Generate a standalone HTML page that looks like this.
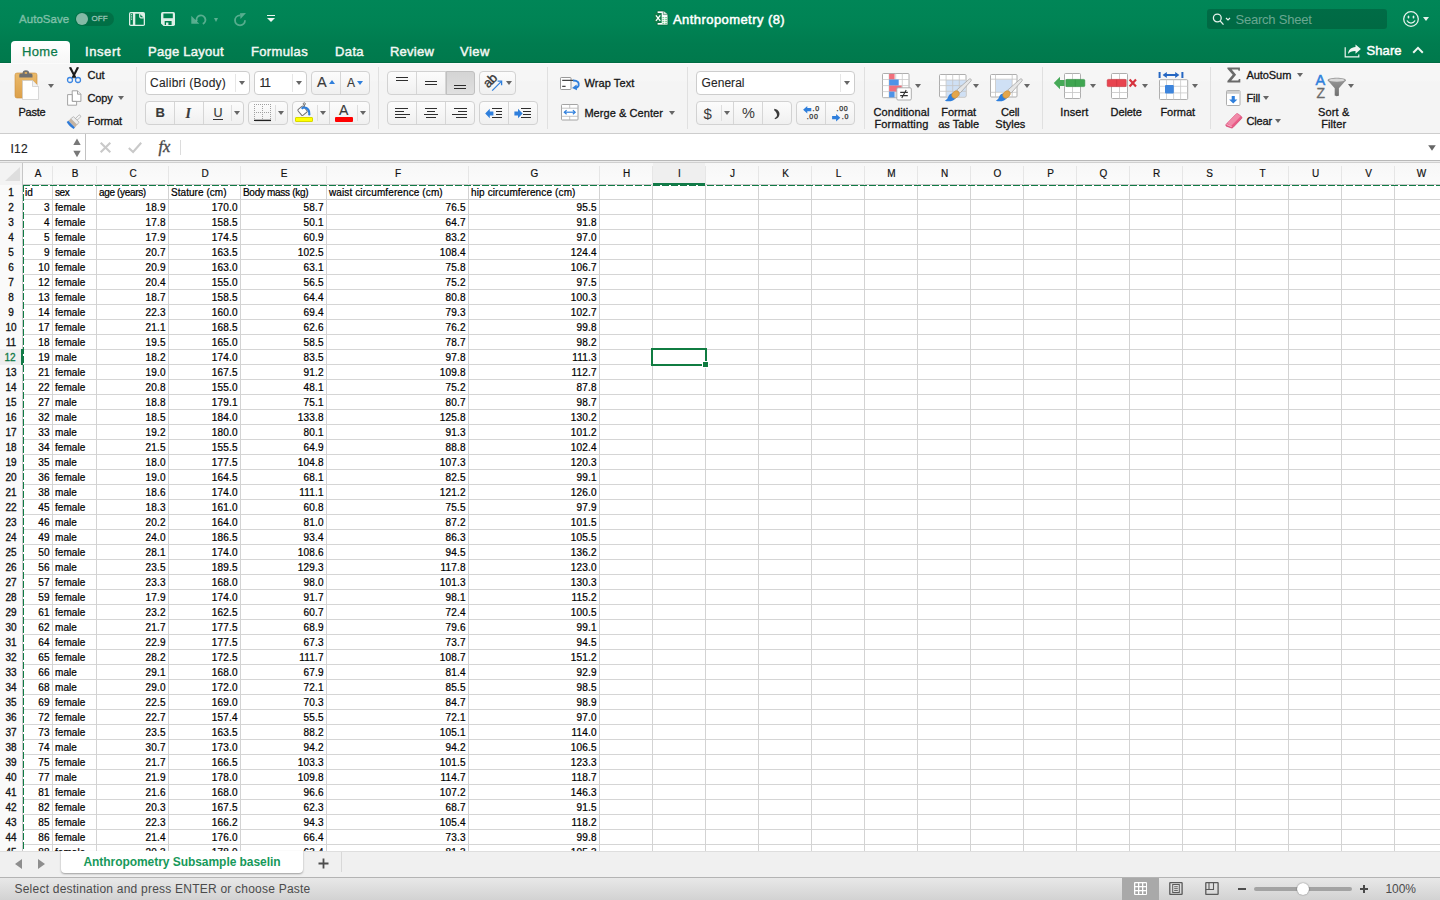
<!DOCTYPE html>
<html lang="en">
<head>
<meta charset="utf-8">
<title>Anthropometry (8)</title>
<style>
*{box-sizing:border-box;margin:0;padding:0}
html,body{width:1440px;height:900px;overflow:hidden;background:#fff}
body{font-family:"Liberation Sans",sans-serif;position:relative;color:#111}
.abs{position:absolute}
svg{position:absolute;overflow:visible}
/* ---------- title bar ---------- */
#top{position:absolute;left:0;top:0;width:1440px;height:63px;background:linear-gradient(#008657 0px,#008354 24px,#007c4f 44px,#00794c 62px,#006c43 62px,#006c43 63px)}
#top .t{position:absolute;color:#fff;white-space:nowrap}
.tab{position:absolute;top:44px;font-size:13px;line-height:15px;color:#f2f7f3;white-space:nowrap;-webkit-text-stroke:.45px #f2f7f3}
#hometab{position:absolute;left:11px;top:41px;width:59px;height:23px;border-radius:4px 4px 0 0;background:linear-gradient(#fff,#f6f6f6)}
/* ---------- ribbon ---------- */
#ribbon{position:absolute;left:0;top:63px;width:1440px;height:71px;background:linear-gradient(#fbfbfb 0,#fbfbfb 1px,#f6f6f6 1px,#f6f6f6 17px,#f4f4f4 19px,#f4f4f4 100%);border-bottom:1px solid #cdcdcd}
.rt{position:absolute;font-size:11px;color:#151515;white-space:nowrap;letter-spacing:.2px;-webkit-text-stroke:.3px #151515}
.rtc{text-align:center;line-height:12px}
.sep{position:absolute;top:67px;width:1px;height:62px;background:#e0e0e0}
.btn{position:absolute;border:1px solid #d2d2d2;border-radius:4px;background:linear-gradient(#fcfcfc,#f0f0f0)}
.btn i{position:absolute;top:0;bottom:0;width:1px;background:#d6d6d6}
.btn i.s{top:3px;bottom:3px;background:#dedede}
.btn b{position:absolute;top:-1px;bottom:-1px;background:linear-gradient(#d4d4d4,#e0e0e0);border:1px solid #c0c0c0}
.rt.ct{color:#262626;-webkit-text-stroke:.1px #262626}
.rt.gi{color:#3a3a3a;-webkit-text-stroke:.15px #3a3a3a}
.rt.sm{-webkit-text-stroke:.25px #2a2a2a;color:#2a2a2a}
.rt.th{-webkit-text-stroke:0}
.combo{position:absolute;border:1px solid #cdcdcd;border-radius:4px;background:#fff}
.combo i{position:absolute;top:2px;bottom:2px;width:1px;background:#e6e6e6}
.dd{position:absolute;width:0;height:0;border-left:3px solid transparent;border-right:3px solid transparent;border-top:4px solid #666}
/* ---------- formula bar ---------- */
#fbar{position:absolute;left:0;top:134px;width:1440px;height:26px;background:#fff}
#fline{position:absolute;left:0;top:160px;width:1440px;height:3px;background:linear-gradient(#b8b8b8 1px,#ececec 1px,#ececec 2px,#d0d0d0 2px)}
/* ---------- grid ---------- */
#colhdr{position:absolute;left:0;top:163px;width:1440px;height:22px;background:linear-gradient(#f7f7f7,#fbfbfb);border-bottom:1px solid #c9c9c9}
.ch{position:absolute;top:0;height:22px;line-height:21px;text-align:center;font-size:10px;color:#111;padding-left:1px;-webkit-text-stroke:.18px #111}
.ch.sel{background:#efefef;border-bottom:2px solid #127a48;height:22px}
.chl{position:absolute;top:3px;width:1px;height:19px;background:#e4e4e4}
#corner{position:absolute;left:0;top:163px;width:22px;height:22px;background:#f3f3f3}
#rowhdr{position:absolute;left:0;top:185px;width:22px;height:666px;background:#fafafa}
.rh{position:absolute;left:0;width:22px;height:15px;line-height:15px;text-align:center;font-size:10px;color:#111;-webkit-text-stroke:.3px #111}
.rh.sel{background:#efefef;color:#127a48;-webkit-text-stroke:.3px #127a48;border-right:2px solid #127a48;width:23px;padding-right:1px;margin-top:-1px;height:16px;padding-top:1px;z-index:2}
#grid{position:absolute;left:0;top:185px;width:1440px;height:666px;overflow:hidden;
 background-image:linear-gradient(to bottom,transparent 14px,#d5d5d5 14px);background-size:100% 15px;background-position:0 0}
.vl{position:absolute;top:185px;width:1px;height:666px;background:#d3d3d3}
.hl{position:absolute;top:166px;width:1px;height:19px;background:#e6e6e6}
.c{position:absolute;height:15px;line-height:15px;font-size:10px;white-space:nowrap;color:#000;-webkit-text-stroke:.22px #000;letter-spacing:.05px}
.c.r{letter-spacing:.2px}
.c.l{text-align:left;padding-left:2px}
.c.r{text-align:right;padding-right:2.300px}
/* ---------- bottom ---------- */
#tabbar{position:absolute;left:0;top:851px;width:1440px;height:26px;background:#f0f0f0;border-top:1px solid #dedede}
#tabline{position:absolute;left:0;top:877px;width:1440px;height:1px;background:#b4b4b4}
#status{position:absolute;left:0;top:878px;width:1440px;height:22px;background:linear-gradient(#e8e8e8,#d2d2d2)}
#sheettab{position:absolute;left:61px;top:851px;width:242px;height:22px;background:#fff;border-radius:0 0 4px 4px;box-shadow:0 1px 2px rgba(0,0,0,.35);text-align:center;font-size:12px;font-weight:bold;color:#17995a;line-height:23px;white-space:nowrap;letter-spacing:-.05px}
</style>
</head>
<body>
<!-- ================= TITLE BAR ================= -->
<div id="top">
<div class="t" style="left:19px;top:12px;font-size:11.5px;line-height:14px;color:rgba(255,255,255,.36);letter-spacing:.05px;-webkit-text-stroke:.5px rgba(255,255,255,.36)">AutoSave</div>
<div class="abs" style="left:75px;top:12px;width:39px;height:14px;border-radius:7px;background:rgba(0,40,20,.22)"></div>
<div class="abs" style="left:76px;top:13px;width:12px;height:12px;border-radius:6px;background:rgba(255,255,255,.52)"></div>
<div class="t" style="left:91.5px;top:14px;font-size:8px;line-height:10px;color:rgba(255,255,255,.5);letter-spacing:.1px;-webkit-text-stroke:.3px rgba(255,255,255,.5)">OFF</div>
<!-- sidebar/doc icon -->
<svg style="left:129px;top:12px" width="16" height="14" viewBox="0 0 16 14"><rect x="0" y="0" width="16" height="14" rx="1.800" fill="#dcefe6"/><rect x="1.300" y="1.300" width="2.600" height="11.400" fill="#00814f"/><path d="M6.300 1.700h4.300l4.100 4.100v6.900H6.300z" fill="#00814f"/><path d="M10.700 1.700v2.900a1.200 1.200 0 0 0 1.200 1.200h2.900" fill="none" stroke="#dcefe6" stroke-width="1.200"/><rect x="2" y="2.200" width="1.100" height="1.100" fill="#dcefe6"/><rect x="2" y="4.400" width="1.100" height="1.100" fill="#dcefe6"/><rect x="2" y="6.600" width="1.100" height="1.100" fill="#dcefe6"/></svg>
<!-- save icon -->
<svg style="left:161px;top:12px" width="14" height="14" viewBox="0 0 14 14"><path d="M1.700 0h10.600a1.700 1.700 0 0 1 1.700 1.700v10.600a1.700 1.700 0 0 1-1.700 1.700H2.600L0 11.400V1.700A1.700 1.700 0 0 1 1.700 0z" fill="#dcefe6"/><rect x="2.400" y="1.500" width="9.400" height="4.700" fill="#00814f"/><rect x="3.700" y="9" width="6.900" height="4" fill="#00804e"/><rect x="5" y="10.500" width="2.400" height="2.500" fill="#dcefe6"/></svg>
<!-- undo -->
<svg style="left:190px;top:12px" width="17" height="14" viewBox="0 0 17 14"><path d="M6.800 9.200A4.400 4.400 0 1 1 12.800 11.800" fill="none" stroke="rgba(255,255,255,.34)" stroke-width="1.900"/><path d="M1.300 3.800v8h8z" fill="rgba(255,255,255,.34)"/></svg>
<div class="abs" style="left:214px;top:18px;width:0;height:0;border-left:2.800px solid transparent;border-right:2.800px solid transparent;border-top:4px solid rgba(255,255,255,.36)"></div>
<!-- redo -->
<svg style="left:233px;top:12px" width="14" height="14" viewBox="0 0 14 14"><path d="M7 3.300A5 5 0 1 0 12 8.300" fill="none" stroke="rgba(255,255,255,.34)" stroke-width="1.800"/><path d="M7 1.200l6-.2-5.500 6z" fill="rgba(255,255,255,.34)"/></svg>
<!-- customize -->
<div class="abs" style="left:267px;top:15px;width:8px;height:1.400px;background:#eef6f1"></div>
<div class="abs" style="left:267px;top:17.800px;width:0;height:0;border-left:4px solid transparent;border-right:4px solid transparent;border-top:4.500px solid #eef6f1"></div>
<!-- title -->
<svg style="left:654px;top:10px" width="15" height="16" viewBox="0 0 15 16"><path d="M3.200 1h6.100l4.600 3.600v10.400H3.200z" fill="#fff" stroke="#0b5f38" stroke-width=".7"/><path d="M9.300 1v3.600h4.600" fill="#d3e6da" stroke="#0b5f38" stroke-width=".5"/><rect x="8.400" y="7.200" width="1.900" height="1" fill="#63c384"/><rect x="11.100" y="7.200" width="1.900" height="1" fill="#63c384"/><rect x="8.400" y="9.200" width="1.900" height="1" fill="#63c384"/><rect x="11.100" y="9.200" width="1.900" height="1" fill="#63c384"/><rect x="8.400" y="11.200" width="1.900" height="1" fill="#63c384"/><rect x="11.100" y="11.200" width="1.900" height="1" fill="#63c384"/><rect x="8.400" y="13.200" width="1.900" height="1" fill="#63c384"/><rect x="11.100" y="13.200" width="1.900" height="1" fill="#63c384"/><rect x=".2" y="3" width="7.500" height="10" fill="#107c4a"/><path d="M1.900 5.300l4.400 5.600M6.300 5.300l-4.400 5.600" stroke="#fff" stroke-width="1.300"/></svg>
<div class="t" style="left:673px;top:11.600px;font-size:13px;line-height:15px;color:#fff;-webkit-text-stroke:.5px #fff;letter-spacing:.43px">Anthropometry (8)</div>
<!-- search -->
<div class="abs" style="left:1207px;top:9px;width:180px;height:20px;border-radius:3px;background:rgba(0,0,0,.185)"></div>
<svg style="left:1212px;top:13px" width="20" height="13" viewBox="0 0 20 13"><circle cx="5.300" cy="5" r="3.900" fill="none" stroke="#e6f2ec" stroke-width="1.300"/><path d="M8.100 7.900l3.400 3.700" stroke="#e6f2ec" stroke-width="1.400"/><path d="M14 5l2 2 2-2" fill="none" stroke="#e6f2ec" stroke-width="1.200"/></svg>
<div class="t" style="left:1235.500px;top:12px;font-size:13px;line-height:15px;color:rgba(255,255,255,.42);letter-spacing:-.23px">Search Sheet</div>
<!-- smiley -->
<svg style="left:1402px;top:10px" width="18" height="18" viewBox="0 0 18 18"><circle cx="9" cy="9" r="7.300" fill="none" stroke="#e6f2ec" stroke-width="1.300"/><ellipse cx="6.500" cy="6.900" rx=".9" ry="1.500" fill="#e6f2ec"/><ellipse cx="11.500" cy="6.900" rx=".9" ry="1.500" fill="#e6f2ec"/><path d="M4.900 10.600c1.700 3.300 6.500 3.300 8.200 0" fill="none" stroke="#e6f2ec" stroke-width="1.200"/></svg>
<div class="abs" style="left:1422.600px;top:17.200px;width:0;height:0;border-left:3px solid transparent;border-right:3px solid transparent;border-top:4.400px solid #e6f2ec"></div>
<!-- tabs -->
<div id="hometab"></div>
<div class="tab" style="left:22px;color:#0b7a4b;-webkit-text-stroke:.25px #0b7a4b;letter-spacing:0.33px">Home</div>
<div class="tab" style="left:85px;letter-spacing:0.58px">Insert</div>
<div class="tab" style="left:148px;letter-spacing:0.27px">Page Layout</div>
<div class="tab" style="left:251px;letter-spacing:0.35px">Formulas</div>
<div class="tab" style="left:335px;letter-spacing:0.38px">Data</div>
<div class="tab" style="left:390px;letter-spacing:0.23px">Review</div>
<div class="tab" style="left:460px;letter-spacing:0.51px">View</div>
<!-- share -->
<svg style="left:1344px;top:44px" width="18" height="14" viewBox="0 0 18 14"><path d="M1.200 3.300v9.500h13.600v-2.400" fill="none" stroke="#eef6f1" stroke-width="1.200"/><path d="M11.500 .4l5.400 4.700-5.400 4.700V7C8 6.900 5.600 7.900 4 10c.4-4 3-6.600 7.500-6.900z" fill="#eef6f1"/></svg>
<div class="t" style="left:1366.500px;top:43px;font-size:13px;line-height:15px;color:#fff;-webkit-text-stroke:.45px #fff;letter-spacing:.1px">Share</div>
<svg style="left:1412px;top:46px" width="12" height="8" viewBox="0 0 12 8"><path d="M1.200 6.800l4.800-4.900 4.800 4.900" fill="none" stroke="#eef6f1" stroke-width="2"/></svg>

</div>
<!-- ================= RIBBON ================= -->
<div id="ribbon"></div>
<!-- clipboard -->
<svg style="left:14px;top:69px" width="26" height="32" viewBox="0 0 26 32"><defs><linearGradient id="gb" x1="0" x2="0" y1="0" y2="1"><stop offset="0" stop-color="#ebba6a"/><stop offset="1" stop-color="#dca04a"/></linearGradient></defs><rect x="1" y="4" width="22" height="25" rx="2" fill="url(#gb)" stroke="#c98f3c" stroke-width=".6"/><path d="M5.300 8.600V6.100a1.500 1.500 0 0 1 1.500-1.500h1.700a3.400 3.400 0 0 1 6.800 0h1.700a1.500 1.500 0 0 1 1.500 1.500v2.500z" fill="#707070"/><rect x="10.700" y="3.100" width="2.400" height="1.700" fill="#e9b25c"/><path d="M8.500 11.500h10l6 6v13h-16z" fill="#fff" stroke="#c9c9c9" stroke-width=".7"/><path d="M18.500 11.500v6h6" fill="#f2f2f2" stroke="#c9c9c9" stroke-width=".7"/></svg>
<div class="abs" style="left:47.5px;top:84px;width:0;height:0;border-left:3.3px solid transparent;border-right:3.3px solid transparent;border-top:4.6px solid #666"></div>
<div class="rt" style="left:18.5px;top:106px;font-size:11px;line-height:13px;letter-spacing:-0.23px">Paste</div>
<svg style="left:66px;top:66px" width="16" height="18" viewBox="0 0 16 18"><path d="M2.900 1.500L5.100 1.100 10.400 11.500 8.700 12.400z" fill="#1a1a1a"/><path d="M13.100 1.500L10.900 1.100 5.600 11.500 7.300 12.400z" fill="#1a1a1a"/><circle cx="4" cy="14" r="2.500" fill="none" stroke="#3b86e3" stroke-width="1.300"/><circle cx="12" cy="14" r="2.500" fill="none" stroke="#3b86e3" stroke-width="1.300"/></svg>
<div class="rt" style="left:87.5px;top:69px;font-size:11px;line-height:13px;letter-spacing:-0.04px">Cut</div>
<svg style="left:66px;top:90px" width="16" height="17" viewBox="0 0 16 17"><path d="M6.200 .8h5.300l3.400 3.400v7.200H6.200z" fill="#fff" stroke="#9a9a9a" stroke-width=".9"/><path d="M11.500 .8v3.400h3.400" fill="#f1f1f1" stroke="#9a9a9a" stroke-width=".9"/><path d="M1.600 4.600h4.600v6.800h4.400v3.800h-9z" fill="#fff" stroke="#9a9a9a" stroke-width=".9"/></svg>
<div class="rt" style="left:87.5px;top:92px;font-size:11px;line-height:13px;letter-spacing:-0.17px">Copy</div>
<div class="abs" style="left:118.2px;top:96.1px;width:0;height:0;border-left:3.3px solid transparent;border-right:3.3px solid transparent;border-top:4.6px solid #666"></div>
<svg style="left:65px;top:113px" width="18" height="16" viewBox="0 0 18 16"><g transform="translate(11.300 6.400) rotate(45)"><rect x="-1.250" y="-5.600" width="2.500" height="6.300" rx="1.200" fill="#f4f4f4" stroke="#9a9a9a" stroke-width=".6"/><path d="M-3.900 0h7.800l.5 3.400h-8.800z" fill="#ededed" stroke="#9d9d9d" stroke-width=".6"/><path d="M-4.400 3.400h8.800l.3 3.200h-9.400z" fill="#c4b3a1"/><path d="M-4.700 6.600h9.400l.2 2.100c-3 .9-6.800.9-9.800 0z" fill="#2f7ad6"/></g></svg>
<div class="rt" style="left:87.5px;top:115px;font-size:11px;line-height:13px;letter-spacing:-0.06px">Format</div>
<div class="sep" style="left:136px"></div>
<!-- font -->
<div class="combo" style="left:145px;top:71px;width:105px;height:24px"><i style="left:89px"></i></div>
<div class="rt ct" style="left:150px;top:76px;font-size:12px;line-height:14px;letter-spacing:0.24px">Calibri (Body)</div>
<div class="abs" style="left:239.2px;top:80.8px;width:0;height:0;border-left:3.3px solid transparent;border-right:3.3px solid transparent;border-top:4.6px solid #666"></div>
<div class="combo" style="left:254px;top:71px;width:52.5px;height:24px"><i style="left:36.8px"></i></div>
<div class="rt ct" style="left:259.5px;top:76px;font-size:12px;line-height:14px;letter-spacing:-0.98px">11</div>
<div class="abs" style="left:296.4px;top:80.8px;width:0;height:0;border-left:3.3px solid transparent;border-right:3.3px solid transparent;border-top:4.6px solid #666"></div>
<div class="btn" style="left:311px;top:71px;width:59px;height:24px"><i style="left:27.8px"></i></div>
<div class="rt gi" style="left:317px;top:74px;font-size:14.5px;line-height:17px;letter-spacing:0.33px">A</div>
<div class="abs" style="left:329px;top:80px;width:0;height:0;border-left:3.500px solid transparent;border-right:3.500px solid transparent;border-bottom:4.200px solid #2f7fdc"></div>
<div class="rt gi" style="left:347px;top:76px;font-size:12px;line-height:14px;letter-spacing:0.48px">A</div>
<div class="abs" style="left:357px;top:81px;width:0;height:0;border-left:3.500px solid transparent;border-right:3.500px solid transparent;border-top:4.200px solid #2f7fdc"></div>
<div class="btn" style="left:145px;top:101px;width:98.5px;height:24px"><i style="left:28px"></i><i style="left:57px"></i><i class="s" style="left:85px"></i></div>
<div class="rt gi" style="left:155.5px;top:105px;font-size:13px;line-height:16px;font-weight:bold">B</div>
<div class="rt gi" style="left:185.500px;top:105.500px;font-family:'Liberation Serif',serif;font-style:italic;font-weight:bold;font-size:14px;line-height:16px">I</div>
<div class="rt gi" style="left:213.5px;top:106px;font-size:12.5px;line-height:15px">U</div>
<div class="abs" style="left:213px;top:119px;width:10px;height:1.200px;background:#333"></div>
<div class="abs" style="left:234.2px;top:111px;width:0;height:0;border-left:3.3px solid transparent;border-right:3.3px solid transparent;border-top:4.6px solid #666"></div>
<div class="btn" style="left:248px;top:101px;width:39.5px;height:24px"><i class="s" style="left:25.8px"></i></div>
<svg style="left:254px;top:104px" width="17" height="18" viewBox="0 0 17 18"><path d="M0 .5h17M0 8.500h17M.5 0v15M8.500 0v15M16.500 0v15" stroke="#a0a0a0" stroke-width="1" stroke-dasharray="1 1" fill="none" shape-rendering="crispEdges"/><path d="M0 16.400h17" stroke="#222" stroke-width="1.400"/></svg>
<div class="abs" style="left:278.2px;top:111px;width:0;height:0;border-left:3.3px solid transparent;border-right:3.3px solid transparent;border-top:4.6px solid #666"></div>
<div class="btn" style="left:292.3px;top:101px;width:77.4px;height:24px"><i style="left:35.9px"></i><i class="s" style="left:23.5px"></i><i class="s" style="left:63.7px"></i></div>
<svg style="left:296px;top:102px" width="16" height="15" viewBox="0 0 16 15"><path d="M8.300 2.800v3.600" stroke="#666" stroke-width="1"/><circle cx="8.300" cy="1.900" r="1.100" fill="none" stroke="#666" stroke-width=".9"/><g transform="translate(6.500 8.700) rotate(-40)"><rect x="-3.500" y="-3.700" width="7" height="7.600" rx="1.100" fill="#fff" stroke="#707070" stroke-width="1"/></g><path d="M5.600 6.700C8.600 4.300 12.800 5.800 13.300 10.800" fill="none" stroke="#2f7fdc" stroke-width="2.100"/><path d="M13.300 9.600c.5 1.200 1.200 1.800 1.200 2.700a1.200 1.200 0 0 1-2.400 0c0-.9.700-1.500 1.200-2.700z" fill="#2f7fdc"/></svg>
<div class="abs" style="left:295px;top:117px;width:18px;height:4.800px;background:#ffff00;border:.5px solid #d8d800;border-radius:1px"></div>
<div class="abs" style="left:320.2px;top:111px;width:0;height:0;border-left:3.3px solid transparent;border-right:3.3px solid transparent;border-top:4.6px solid #666"></div>
<div class="rt gi" style="left:339px;top:102px;font-size:14px;line-height:17px;letter-spacing:0.66px">A</div>
<div class="abs" style="left:335px;top:117px;width:18px;height:4.800px;background:#f00;border-radius:1px"></div>
<div class="abs" style="left:360.2px;top:111px;width:0;height:0;border-left:3.3px solid transparent;border-right:3.3px solid transparent;border-top:4.6px solid #666"></div>
<div class="sep" style="left:378px"></div>
<!-- alignment -->
<div class="btn" style="left:387.2px;top:71px;width:87.6px;height:24px"><b style="left:57.4px;width:29.2px;border-radius:0 3px 3px 0"></b><i style="left:27.7px"></i><i style="left:56.9px"></i></div>
<div class="abs" style="left:396px;top:76.8px;width:12px;height:1.4px;background:#2e2e2e"></div>
<div class="abs" style="left:396px;top:79.9px;width:12px;height:1.4px;background:#2e2e2e"></div>
<div class="abs" style="left:425px;top:80.8px;width:12px;height:1.4px;background:#2e2e2e"></div>
<div class="abs" style="left:425px;top:83.9px;width:12px;height:1.4px;background:#2e2e2e"></div>
<div class="abs" style="left:454px;top:84.9px;width:12px;height:1.4px;background:#2e2e2e"></div>
<div class="abs" style="left:454px;top:88px;width:12px;height:1.4px;background:#2e2e2e"></div>
<div class="btn" style="left:479px;top:71px;width:36.6px;height:24px"></div>
<div class="rt gi" style="left:483px;top:72.500px;font-size:13px;line-height:15px;transform:rotate(-45deg);transform-origin:50% 50%;letter-spacing:-.3px;-webkit-text-stroke:.35px #3a3a3a">ab</div>
<svg style="left:490px;top:78px" width="14" height="14" viewBox="0 0 14 14"><path d="M2.200 12.600L11.200 3.600" stroke="#2f7fdc" stroke-width="1.200"/><path d="M7.600 3.200h4v4" fill="none" stroke="#2f7fdc" stroke-width="1.300"/></svg>
<div class="abs" style="left:506.2px;top:81px;width:0;height:0;border-left:3.3px solid transparent;border-right:3.3px solid transparent;border-top:4.6px solid #666"></div>
<div class="btn" style="left:387.2px;top:101px;width:87.6px;height:24px"><i style="left:27.7px"></i><i style="left:56.9px"></i></div>
<div class="abs" style="left:394.8px;top:107.6px;width:13px;height:1.4px;background:#2e2e2e"></div>
<div class="abs" style="left:394.8px;top:110.7px;width:9px;height:1.4px;background:#2e2e2e"></div>
<div class="abs" style="left:394.8px;top:113.8px;width:15px;height:1.4px;background:#2e2e2e"></div>
<div class="abs" style="left:394.8px;top:116.8px;width:11px;height:1.4px;background:#2e2e2e"></div>
<div class="abs" style="left:425px;top:107.6px;width:12px;height:1.4px;background:#2e2e2e"></div>
<div class="abs" style="left:427px;top:110.7px;width:8px;height:1.4px;background:#2e2e2e"></div>
<div class="abs" style="left:424px;top:113.8px;width:14px;height:1.4px;background:#2e2e2e"></div>
<div class="abs" style="left:426px;top:116.8px;width:10px;height:1.4px;background:#2e2e2e"></div>
<div class="abs" style="left:454.2px;top:107.6px;width:13px;height:1.4px;background:#2e2e2e"></div>
<div class="abs" style="left:458.2px;top:110.7px;width:9px;height:1.4px;background:#2e2e2e"></div>
<div class="abs" style="left:452.2px;top:113.8px;width:15px;height:1.4px;background:#2e2e2e"></div>
<div class="abs" style="left:456.2px;top:116.8px;width:11px;height:1.4px;background:#2e2e2e"></div>
<div class="btn" style="left:479px;top:101px;width:58.6px;height:24px"><i style="left:28px"></i></div>
<svg style="left:484.5px;top:107.5px" width="9" height="11" viewBox="0 0 9 11"><path d="M.2 5.500L4.800 .8v2.600h3.600v4.200H4.800v2.600z" fill="#2f7fdc"/></svg>
<div class="abs" style="left:492.3px;top:107.6px;width:9.7px;height:1.400px;background:#2e2e2e"></div>
<div class="abs" style="left:495.6px;top:110.7px;width:6.4px;height:1.400px;background:#2e2e2e"></div>
<div class="abs" style="left:495.6px;top:113.8px;width:6.4px;height:1.400px;background:#2e2e2e"></div>
<div class="abs" style="left:492.3px;top:116.8px;width:9.7px;height:1.400px;background:#2e2e2e"></div>
<svg style="left:513.6px;top:107.5px" width="9" height="11" viewBox="0 0 9 11"><path d="M8.600 5.500L4 .8v2.600H.4v4.200H4v2.600z" fill="#2f7fdc"/></svg>
<div class="abs" style="left:521px;top:107.6px;width:10px;height:1.400px;background:#2e2e2e"></div>
<div class="abs" style="left:522.5px;top:110.7px;width:8.5px;height:1.400px;background:#2e2e2e"></div>
<div class="abs" style="left:522.5px;top:113.8px;width:8.5px;height:1.400px;background:#2e2e2e"></div>
<div class="abs" style="left:521px;top:116.8px;width:10px;height:1.400px;background:#2e2e2e"></div>
<div class="sep" style="left:546.5px"></div>
<svg style="left:560px;top:77px" width="21" height="13" viewBox="0 0 21 13"><rect x=".5" y=".5" width="10.500" height="12" rx=".8" fill="#fff" stroke="#8d8d8d" stroke-width=".9"/><path d="M2.200 3.400h11.200M2.200 9.400h3.400" stroke="#444" stroke-width="1.100"/><path d="M13 3.400c4.400-.2 6.600 2.400 5.600 5.200-.5 1.300-1.800 2.200-3.400 2.400" fill="none" stroke="#2f7fdc" stroke-width="2"/><path d="M16.600 7.600l-4.600 3.400 5 2.200z" fill="#2f7fdc"/></svg>
<div class="rt" style="left:584.4px;top:77px;font-size:11px;line-height:13px;letter-spacing:0.1px">Wrap Text</div>
<svg style="left:561px;top:103.8px" width="17.5" height="16.5" viewBox="0 0 17.5 16.5"><rect x=".5" y=".5" width="16.500" height="15.500" rx=".8" fill="#fff" stroke="#9a9a9a" stroke-width=".9"/><path d="M.5 4.200h16.500M.5 12.300h16.500M8.700 .5v3.700M8.700 12.300v3.700" stroke="#b5b5b5" stroke-width=".8"/><path d="M3.600 8.200h10.300" stroke="#2f7fdc" stroke-width="1.200"/><path d="M5.600 6.200l-2.300 2 2.300 2M11.900 6.200l2.300 2-2.300 2" fill="none" stroke="#2f7fdc" stroke-width="1.200"/></svg>
<div class="rt" style="left:584.4px;top:107px;font-size:11px;line-height:13px;letter-spacing:0.07px">Merge &amp; Center</div>
<div class="abs" style="left:669.2px;top:111px;width:0;height:0;border-left:3.3px solid transparent;border-right:3.3px solid transparent;border-top:4.6px solid #666"></div>
<div class="sep" style="left:687px"></div>
<!-- number -->
<div class="combo" style="left:696.2px;top:71px;width:158.4px;height:24px"><i style="left:142.7px"></i></div>
<div class="rt ct" style="left:701.6px;top:76px;font-size:12px;line-height:14px;letter-spacing:0.04px">General</div>
<div class="abs" style="left:844.2px;top:80.8px;width:0;height:0;border-left:3.3px solid transparent;border-right:3.3px solid transparent;border-top:4.6px solid #666"></div>
<div class="btn" style="left:696.2px;top:101px;width:95.8px;height:24px"><i style="left:35.8px"></i><i style="left:64.5px"></i><i class="s" style="left:23.5px"></i></div>
<div class="rt gi th" style="left:703.6px;top:105px;font-size:15px;line-height:18px;letter-spacing:-0.34px">$</div>
<div class="abs" style="left:724.4px;top:111px;width:0;height:0;border-left:3.3px solid transparent;border-right:3.3px solid transparent;border-top:4.6px solid #666"></div>
<div class="rt gi th" style="left:742px;top:105px;font-size:14.5px;line-height:17px;letter-spacing:-0.91px">%</div>
<svg style="left:773px;top:107.5px" width="8" height="12" viewBox="0 0 8 12"><path d="M1.400 .8c4.400.6 6.200 4.600 4.400 7.800-.8 1.400-2.200 2.300-3.800 2.600l-.4-.9c1.700-.8 2.400-1.800 2.400-3.200 0-1.800-1.200-3.600-2.900-4.900z" fill="#3a3a3a"/></svg>
<div class="btn" style="left:796.2px;top:101px;width:58.4px;height:24px"><i style="left:27.7px"></i></div>
<svg style="left:802.8px;top:105.8px" width="8.4" height="7.4" viewBox="0 0 8.4 7.4"><path d="M.1 3.700L4.300 0v2.100h4v3.200h-4v2.100z" fill="#2f7fdc"/></svg>
<div class="rt sm" style="left:812.6px;top:105px;font-size:7px;line-height:8px;letter-spacing:.7px">.0</div>
<div class="rt sm" style="left:806.7px;top:113px;font-size:7px;line-height:8px;letter-spacing:.7px">.00</div>
<div class="rt sm" style="left:836.5px;top:105px;font-size:7px;line-height:8px;letter-spacing:.7px">.00</div>
<svg style="left:831.9px;top:114.1px" width="8.4" height="7.4" viewBox="0 0 8.4 7.4"><path d="M8.300 3.700L4.100 0v2.100h-4v3.200h4v2.100z" fill="#2f7fdc"/></svg>
<div class="rt sm" style="left:841.8px;top:113px;font-size:7px;line-height:8px;letter-spacing:.7px">.0</div>
<div class="sep" style="left:863.5px"></div>
<!-- styles -->
<svg style="left:882px;top:73px" width="30" height="28" viewBox="0 0 30 28"><rect x=".5" y=".5" width="26.500" height="24.200" rx="1" fill="#fff" stroke="#a5a5a5" stroke-width=".9"/><path d="M7.100 .5v24.200M13.700 .5v24.200M20.300 .5v24.200M.5 6.500h26.500M.5 12.600h26.500M.5 18.600h26.500" stroke="#c9c9c9" stroke-width=".8"/><rect x="7.100" y=".9" width="5.500" height="5.600" fill="#f0707c"/><rect x="7.100" y="6.500" width="9.600" height="6.100" fill="#4e93e6"/><rect x="7.100" y="12.600" width="12.600" height="6" fill="#f0707c"/><rect x="7.100" y="18.600" width="5.500" height="5.800" fill="#4e93e6"/><rect x="14.800" y="14.800" width="14.500" height="12.200" rx="1.200" fill="#fff" stroke="#a5a5a5" stroke-width=".9"/><path d="M18.200 19.400h7.600M18.200 22.600h7.600M24.200 17l-4.400 8" stroke="#333" stroke-width="1.100"/></svg>
<div class="abs" style="left:915.2px;top:84px;width:0;height:0;border-left:3.3px solid transparent;border-right:3.3px solid transparent;border-top:4.6px solid #666"></div>
<div class="rt" style="left:873.5px;top:106px;font-size:11px;line-height:13px;letter-spacing:0.09px">Conditional</div>
<div class="rt" style="left:874.5px;top:118px;font-size:11px;line-height:13px;letter-spacing:0.14px">Formatting</div>
<svg style="left:939px;top:74px" width="36" height="29" viewBox="0 0 36 29"><rect x=".5" y=".5" width="26.500" height="22.500" rx="1" fill="#fff" stroke="#a5a5a5" stroke-width=".9"/><rect x="7.200" y="6" width="19.400" height="16.600" fill="#cfe0f5"/><path d="M7.100 .5v22.500M13.700 .5v22.500M20.300 .5v22.500M.5 6h26.500M.5 11.600h26.500M.5 17.300h26.500" stroke="#c4c4c4" stroke-width=".8"/><path d="M30.300 5a1.300 1.300 0 0 1 1.800 1.800L21 19.200 17.800 16z" fill="#e6e6e6" stroke="#9e9e9e" stroke-width=".7"/><path d="M13.600 19.200c-2.600.2-3.900 1.900-4.500 3.800-.5 1.600-1.500 2.800-3.300 3.700 4.300 1.300 9.100.4 11.500-3.300.6-1 .5-1.800-.2-2.500z" fill="#2f7fdc"/><ellipse cx="16.500" cy="20.500" rx="4.100" ry="3.200" transform="rotate(-45 16.500 20.500)" fill="#e3a64c" stroke="#c78a35" stroke-width=".5"/></svg>
<div class="abs" style="left:973px;top:84px;width:0;height:0;border-left:3.3px solid transparent;border-right:3.3px solid transparent;border-top:4.6px solid #666"></div>
<div class="rt" style="left:941.2px;top:106px;font-size:11px;line-height:13px;letter-spacing:0.03px">Format</div>
<div class="rt" style="left:938.2px;top:118px;font-size:11px;line-height:13px;letter-spacing:0.03px">as Table</div>
<svg style="left:990px;top:74px" width="36" height="29" viewBox="0 0 36 29"><rect x=".5" y=".5" width="26.500" height="22.500" rx="1" fill="#fff" stroke="#a5a5a5" stroke-width=".9"/><rect x="6" y="5.500" width="16" height="12.500" fill="#cfe0f5"/><path d="M5.500 .5v22.500M22.200 .5v22.500M.5 5.200h26.500M.5 18.300h26.500" stroke="#c4c4c4" stroke-width=".8"/><path d="M30.300 5a1.300 1.300 0 0 1 1.800 1.800L21 19.200 17.800 16z" fill="#e6e6e6" stroke="#9e9e9e" stroke-width=".7"/><path d="M13.600 19.200c-2.600.2-3.900 1.900-4.500 3.800-.5 1.600-1.500 2.800-3.300 3.700 4.300 1.300 9.100.4 11.500-3.300.6-1 .5-1.800-.2-2.500z" fill="#2f7fdc"/><ellipse cx="16.500" cy="20.500" rx="4.100" ry="3.200" transform="rotate(-45 16.500 20.500)" fill="#e3a64c" stroke="#c78a35" stroke-width=".5"/></svg>
<div class="abs" style="left:1024.2px;top:84px;width:0;height:0;border-left:3.3px solid transparent;border-right:3.3px solid transparent;border-top:4.6px solid #666"></div>
<div class="rt" style="left:1001px;top:106px;font-size:11px;line-height:13px;letter-spacing:-0.14px">Cell</div>
<div class="rt" style="left:995.35px;top:118px;font-size:11px;line-height:13px;letter-spacing:-0.01px">Styles</div>
<div class="sep" style="left:1042.3px"></div>
<!-- cells -->
<svg style="left:1053px;top:73px" width="33" height="27" viewBox="0 0 33 27"><rect x="11.500" y=".5" width="16" height="25" rx="1" fill="#fff" stroke="#a5a5a5" stroke-width=".9"/><path d="M19.500 .5v25M11.500 6.700h16M11.500 13.400h16M11.500 19.500h16" stroke="#c4c4c4" stroke-width=".8"/><path d="M.8 10l6.200-6.200v3.100h4.500v6.200H7v3.100z" fill="#46a957"/><rect x="12.800" y="6.400" width="19" height="7.200" rx="1.200" fill="#3fa651" stroke="#2f8f41" stroke-width=".6"/><path d="M22.300 6.600v6.800" stroke="#2f8f41" stroke-width=".6"/></svg>
<div class="abs" style="left:1090.2px;top:84px;width:0;height:0;border-left:3.3px solid transparent;border-right:3.3px solid transparent;border-top:4.6px solid #666"></div>
<div class="rt" style="left:1060.35px;top:106px;font-size:11px;line-height:13px;letter-spacing:0.1px">Insert</div>
<svg style="left:1106px;top:73px" width="33" height="27" viewBox="0 0 33 27"><rect x="5.500" y=".5" width="16" height="25" rx="1" fill="#fff" stroke="#a5a5a5" stroke-width=".9"/><path d="M13.500 .5v25M5.500 6.700h16M5.500 13.400h16M5.500 19.500h16" stroke="#c4c4c4" stroke-width=".8"/><rect x="1.200" y="6.400" width="19" height="7.200" rx="1.200" fill="#e8444f" stroke="#c8303b" stroke-width=".6"/><path d="M10.700 6.600v6.800" stroke="#c8303b" stroke-width=".6"/><path d="M23.600 6.600l6.400 6.800M30 6.600l-6.400 6.800" stroke="#d6323d" stroke-width="2.200"/></svg>
<div class="abs" style="left:1142px;top:84px;width:0;height:0;border-left:3.3px solid transparent;border-right:3.3px solid transparent;border-top:4.6px solid #666"></div>
<div class="rt" style="left:1110.55px;top:106px;font-size:11px;line-height:13px;letter-spacing:-0.08px">Delete</div>
<svg style="left:1158px;top:71px" width="31" height="30" viewBox="0 0 31 30"><rect x="1.500" y="8.700" width="28.200" height="19.800" rx="1" fill="#fff" stroke="#a5a5a5" stroke-width=".9"/><path d="M8.500 8.700v19.800M15.600 8.700v19.800M22.600 8.700v19.800M1.500 15.300h28.200M1.500 21.900h28.200" stroke="#c9c9c9" stroke-width=".8"/><rect x="7" y="14" width="8.800" height="8.600" rx="1" fill="#3d85dd"/><path d="M1.600 1v6M24.400 1v6" stroke="#2566c2" stroke-width="2"/><path d="M7.500 4h11" stroke="#2566c2" stroke-width="2"/><path d="M8.800 .9L4.600 4l4.200 3.100zM17.200 .9L21.400 4l-4.200 3.100z" fill="#2566c2"/></svg>
<div class="abs" style="left:1192.2px;top:84px;width:0;height:0;border-left:3.3px solid transparent;border-right:3.3px solid transparent;border-top:4.6px solid #666"></div>
<div class="rt" style="left:1160.4px;top:106px;font-size:11px;line-height:13px;letter-spacing:-0.04px">Format</div>
<div class="sep" style="left:1210px"></div>
<!-- editing -->
<svg style="left:1226.5px;top:67px" width="14" height="16" viewBox="0 0 14 16"><path d="M.4 .4h12.500v3.300h-1.400l-.4-1.300H4.700l4.400 5.400-4.800 5.800h7l.6-1.600h1.400v3.600H.4v-1.500l5.300-6.300L.4 1.700z" fill="#6a6a6a"/></svg>
<div class="rt" style="left:1246.5px;top:69px;font-size:11px;line-height:13px;letter-spacing:-0.07px">AutoSum</div>
<div class="abs" style="left:1297.2px;top:73.2px;width:0;height:0;border-left:3.3px solid transparent;border-right:3.3px solid transparent;border-top:4.6px solid #666"></div>
<svg style="left:1226px;top:90px" width="14.5" height="16" viewBox="0 0 14.5 16"><rect x=".5" y=".5" width="13.500" height="15" rx="1" fill="#fff" stroke="#a5a5a5" stroke-width=".9"/><rect x=".9" y=".9" width="12.700" height="2.900" fill="#cfcfcf"/><path d="M5.700 6h3.100v3.600h2.600L7.250 13.600 3.100 9.600h2.600z" fill="#2f7fdc"/></svg>
<div class="rt" style="left:1246.5px;top:92px;font-size:11px;line-height:13px;letter-spacing:-0.14px">Fill</div>
<div class="abs" style="left:1263.4px;top:96px;width:0;height:0;border-left:3.3px solid transparent;border-right:3.3px solid transparent;border-top:4.6px solid #666"></div>
<svg style="left:1224.5px;top:112px" width="18" height="17" viewBox="0 0 18 17"><path d="M1.200 12.300l9.800-10.100c.6-.6 1.500-.7 2.100-.2l3.300 2.600c.6.500.7 1.300.2 1.900L7.900 15.600c-.5.500-1.300.6-1.900.2l-4.600-1.600c-.7-.4-.8-1.300-.2-1.900z" fill="#ea5b86" stroke="#cf3e6b" stroke-width=".7"/><path d="M2.200 11.300l9-9.300c.5-.5 1.100-.5 1.600-.1l2.900 2.300-9.600 9.900z" fill="#f18aa9"/><path d="M1.500 12.400l5.200 2.300" stroke="#f7b8cb" stroke-width="1"/></svg>
<div class="rt" style="left:1246.5px;top:115px;font-size:11px;line-height:13px;letter-spacing:-0.18px">Clear</div>
<div class="abs" style="left:1275.2px;top:119px;width:0;height:0;border-left:3.3px solid transparent;border-right:3.3px solid transparent;border-top:4.6px solid #666"></div>
<div class="rt" style="left:1315.4px;top:72px;font-size:14.5px;line-height:17px;letter-spacing:1.33px;color:#2f7fdc;-webkit-text-stroke:.5px #2f7fdc">A</div>
<div class="rt" style="left:1316.6px;top:85px;font-size:14px;line-height:17px;letter-spacing:0.64px;color:#6a6a6a;-webkit-text-stroke:.3px #6a6a6a">Z</div>
<svg style="left:1326.6px;top:76.8px" width="20" height="21" viewBox="0 0 20 21"><defs><linearGradient id="gf" x1="0" x2="0" y1="0" y2="1"><stop offset="0" stop-color="#9a9a9a"/><stop offset="1" stop-color="#707070"/></linearGradient></defs><path d="M.6 3.200c0-1.400 4-2.400 9.200-2.400s9.200 1 9.200 2.400c0 .5-.4.900-1.100 1.300l-6 6.800v7c0 1.200-4.200 1.200-4.200 0v-7l-6-6.800C1 4.100.6 3.700.6 3.200z" fill="url(#gf)"/><ellipse cx="9.800" cy="3.200" rx="7.800" ry="1.600" fill="#d9d9d9"/></svg>
<div class="abs" style="left:1348.2px;top:84px;width:0;height:0;border-left:3.3px solid transparent;border-right:3.3px solid transparent;border-top:4.6px solid #666"></div>
<div class="rt" style="left:1318px;top:106px;font-size:11px;line-height:13px;letter-spacing:0.14px">Sort &amp;</div>
<div class="rt" style="left:1321.2px;top:118px;font-size:11px;line-height:13px;letter-spacing:0.09px">Filter</div>

<!-- ================= FORMULA BAR ================= -->
<div id="fbar"></div>
<div id="fline"></div>
<div class="abs" style="left:10.500px;top:142px;font-size:12px;line-height:14px;color:#222;letter-spacing:.2px;-webkit-text-stroke:.15px #222">I12</div>
<svg style="left:72.500px;top:137.500px" width="8" height="20" viewBox="0 0 8 20"><path d="M4 .4L7.700 6.900H.3zM4 19.200L7.700 12.700H.3z" fill="#787878"/></svg>
<div class="abs" style="left:85px;top:134px;width:1px;height:26px;background:#c2c2c2"></div>
<svg style="left:100px;top:142px" width="11" height="11" viewBox="0 0 11 11"><path d="M.7 .7l9.600 9.600M10.300 .7L.7 10.300" stroke="#c9c9c9" stroke-width="2.100"/></svg>
<svg style="left:128px;top:142px" width="14" height="11" viewBox="0 0 14 11"><path d="M.8 6l4.300 4L13.200 .8" fill="none" stroke="#c9c9c9" stroke-width="2.100"/></svg>
<div class="abs" style="left:158.500px;top:138px;font-family:'Liberation Serif',serif;font-style:italic;font-size:16.500px;line-height:18px;color:#484848;letter-spacing:0;-webkit-text-stroke:.35px #484848">fx</div>
<div class="abs" style="left:180px;top:140px;width:1px;height:15px;background:#dcdcdc"></div>
<svg style="left:1428px;top:145px" width="8" height="6" viewBox="0 0 8 6"><path d="M.2 .3h7.600L4 5.800z" fill="#666"/></svg>

<!-- ================= GRID ================= -->
<div id="colhdr">
<div class="ch" style="left:23px;width:29px">A</div>
<div class="ch" style="left:53px;width:43px">B</div>
<div class="ch" style="left:97px;width:71px">C</div>
<div class="ch" style="left:169px;width:71px">D</div>
<div class="ch" style="left:241px;width:85px">E</div>
<div class="ch" style="left:327px;width:141px">F</div>
<div class="ch" style="left:469px;width:130px">G</div>
<div class="ch" style="left:600px;width:52px">H</div>
<div class="ch sel" style="left:653px;width:52px">I</div>
<div class="ch" style="left:706px;width:52px">J</div>
<div class="ch" style="left:759px;width:52px">K</div>
<div class="ch" style="left:812px;width:52px">L</div>
<div class="ch" style="left:865px;width:52px">M</div>
<div class="ch" style="left:918px;width:52px">N</div>
<div class="ch" style="left:971px;width:52px">O</div>
<div class="ch" style="left:1024px;width:52px">P</div>
<div class="ch" style="left:1077px;width:52px">Q</div>
<div class="ch" style="left:1130px;width:52px">R</div>
<div class="ch" style="left:1183px;width:52px">S</div>
<div class="ch" style="left:1236px;width:52px">T</div>
<div class="ch" style="left:1289px;width:52px">U</div>
<div class="ch" style="left:1342px;width:52px">V</div>
<div class="ch" style="left:1395px;width:52px">W</div>
</div>
<div id="corner"></div>
<svg style="left:5px;top:167px" width="15" height="14" viewBox="0 0 15 14"><path d="M15 0v14H0z" fill="#dedede"/></svg>
<i class="vl" style="left:22px;top:163px;height:688px;background:#c6c6c6"></i>
<div id="grid"></div>
<div id="rowhdr"></div>
<i class="vl" style="left:52px"></i><i class="hl" style="left:52px"></i>
<i class="vl" style="left:96px"></i><i class="hl" style="left:96px"></i>
<i class="vl" style="left:168px"></i><i class="hl" style="left:168px"></i>
<i class="vl" style="left:240px"></i><i class="hl" style="left:240px"></i>
<i class="vl" style="left:326px"></i><i class="hl" style="left:326px"></i>
<i class="vl" style="left:468px"></i><i class="hl" style="left:468px"></i>
<i class="vl" style="left:599px"></i><i class="hl" style="left:599px"></i>
<i class="vl" style="left:652px"></i><i class="hl" style="left:652px"></i>
<i class="vl" style="left:705px"></i><i class="hl" style="left:705px"></i>
<i class="vl" style="left:758px"></i><i class="hl" style="left:758px"></i>
<i class="vl" style="left:811px"></i><i class="hl" style="left:811px"></i>
<i class="vl" style="left:864px"></i><i class="hl" style="left:864px"></i>
<i class="vl" style="left:917px"></i><i class="hl" style="left:917px"></i>
<i class="vl" style="left:970px"></i><i class="hl" style="left:970px"></i>
<i class="vl" style="left:1023px"></i><i class="hl" style="left:1023px"></i>
<i class="vl" style="left:1076px"></i><i class="hl" style="left:1076px"></i>
<i class="vl" style="left:1129px"></i><i class="hl" style="left:1129px"></i>
<i class="vl" style="left:1182px"></i><i class="hl" style="left:1182px"></i>
<i class="vl" style="left:1235px"></i><i class="hl" style="left:1235px"></i>
<i class="vl" style="left:1288px"></i><i class="hl" style="left:1288px"></i>
<i class="vl" style="left:1341px"></i><i class="hl" style="left:1341px"></i>
<i class="vl" style="left:1394px"></i><i class="hl" style="left:1394px"></i>
<div id="rowhdrs">
<div class="rh" style="top:185px">1</div>
<div class="rh" style="top:200px">2</div>
<div class="rh" style="top:215px">3</div>
<div class="rh" style="top:230px">4</div>
<div class="rh" style="top:245px">5</div>
<div class="rh" style="top:260px">6</div>
<div class="rh" style="top:275px">7</div>
<div class="rh" style="top:290px">8</div>
<div class="rh" style="top:305px">9</div>
<div class="rh" style="top:320px">10</div>
<div class="rh" style="top:335px">11</div>
<div class="rh sel" style="top:350px">12</div>
<div class="rh" style="top:365px">13</div>
<div class="rh" style="top:380px">14</div>
<div class="rh" style="top:395px">15</div>
<div class="rh" style="top:410px">16</div>
<div class="rh" style="top:425px">17</div>
<div class="rh" style="top:440px">18</div>
<div class="rh" style="top:455px">19</div>
<div class="rh" style="top:470px">20</div>
<div class="rh" style="top:485px">21</div>
<div class="rh" style="top:500px">22</div>
<div class="rh" style="top:515px">23</div>
<div class="rh" style="top:530px">24</div>
<div class="rh" style="top:545px">25</div>
<div class="rh" style="top:560px">26</div>
<div class="rh" style="top:575px">27</div>
<div class="rh" style="top:590px">28</div>
<div class="rh" style="top:605px">29</div>
<div class="rh" style="top:620px">30</div>
<div class="rh" style="top:635px">31</div>
<div class="rh" style="top:650px">32</div>
<div class="rh" style="top:665px">33</div>
<div class="rh" style="top:680px">34</div>
<div class="rh" style="top:695px">35</div>
<div class="rh" style="top:710px">36</div>
<div class="rh" style="top:725px">37</div>
<div class="rh" style="top:740px">38</div>
<div class="rh" style="top:755px">39</div>
<div class="rh" style="top:770px">40</div>
<div class="rh" style="top:785px">41</div>
<div class="rh" style="top:800px">42</div>
<div class="rh" style="top:815px">43</div>
<div class="rh" style="top:830px">44</div>
<div class="rh" style="top:845px">45</div>
</div>
<div id="cells">
<div class="c l" style="left:23px;top:185px;width:29px">id</div>
<div class="c l" style="left:53px;top:185px;width:43px;letter-spacing:-0.45px">sex</div>
<div class="c l" style="left:97px;top:185px;width:71px;letter-spacing:-0.34px">age (years)</div>
<div class="c l" style="left:169px;top:185px;width:71px;letter-spacing:0.05px">Stature (cm)</div>
<div class="c l" style="left:241px;top:185px;width:85px;letter-spacing:-0.3px">Body mass (kg)</div>
<div class="c l" style="left:327px;top:185px;width:141px;letter-spacing:0.11px">waist circumference (cm)</div>
<div class="c l" style="left:469px;top:185px;width:130px;letter-spacing:0.13px">hip circumference (cm)</div>
<div class="c r" style="left:23px;top:200px;width:29px">3</div>
<div class="c l" style="left:53px;top:200px;width:43px">female</div>
<div class="c r" style="left:97px;top:200px;width:71px">18.9</div>
<div class="c r" style="left:169px;top:200px;width:71px">170.0</div>
<div class="c r" style="left:241px;top:200px;width:85px">58.7</div>
<div class="c r" style="left:327px;top:200px;width:141px">76.5</div>
<div class="c r" style="left:469px;top:200px;width:130px">95.5</div>
<div class="c r" style="left:23px;top:215px;width:29px">4</div>
<div class="c l" style="left:53px;top:215px;width:43px">female</div>
<div class="c r" style="left:97px;top:215px;width:71px">17.8</div>
<div class="c r" style="left:169px;top:215px;width:71px">158.5</div>
<div class="c r" style="left:241px;top:215px;width:85px">50.1</div>
<div class="c r" style="left:327px;top:215px;width:141px">64.7</div>
<div class="c r" style="left:469px;top:215px;width:130px">91.8</div>
<div class="c r" style="left:23px;top:230px;width:29px">5</div>
<div class="c l" style="left:53px;top:230px;width:43px">female</div>
<div class="c r" style="left:97px;top:230px;width:71px">17.9</div>
<div class="c r" style="left:169px;top:230px;width:71px">174.5</div>
<div class="c r" style="left:241px;top:230px;width:85px">60.9</div>
<div class="c r" style="left:327px;top:230px;width:141px">83.2</div>
<div class="c r" style="left:469px;top:230px;width:130px">97.0</div>
<div class="c r" style="left:23px;top:245px;width:29px">9</div>
<div class="c l" style="left:53px;top:245px;width:43px">female</div>
<div class="c r" style="left:97px;top:245px;width:71px">20.7</div>
<div class="c r" style="left:169px;top:245px;width:71px">163.5</div>
<div class="c r" style="left:241px;top:245px;width:85px">102.5</div>
<div class="c r" style="left:327px;top:245px;width:141px">108.4</div>
<div class="c r" style="left:469px;top:245px;width:130px">124.4</div>
<div class="c r" style="left:23px;top:260px;width:29px">10</div>
<div class="c l" style="left:53px;top:260px;width:43px">female</div>
<div class="c r" style="left:97px;top:260px;width:71px">20.9</div>
<div class="c r" style="left:169px;top:260px;width:71px">163.0</div>
<div class="c r" style="left:241px;top:260px;width:85px">63.1</div>
<div class="c r" style="left:327px;top:260px;width:141px">75.8</div>
<div class="c r" style="left:469px;top:260px;width:130px">106.7</div>
<div class="c r" style="left:23px;top:275px;width:29px">12</div>
<div class="c l" style="left:53px;top:275px;width:43px">female</div>
<div class="c r" style="left:97px;top:275px;width:71px">20.4</div>
<div class="c r" style="left:169px;top:275px;width:71px">155.0</div>
<div class="c r" style="left:241px;top:275px;width:85px">56.5</div>
<div class="c r" style="left:327px;top:275px;width:141px">75.2</div>
<div class="c r" style="left:469px;top:275px;width:130px">97.5</div>
<div class="c r" style="left:23px;top:290px;width:29px">13</div>
<div class="c l" style="left:53px;top:290px;width:43px">female</div>
<div class="c r" style="left:97px;top:290px;width:71px">18.7</div>
<div class="c r" style="left:169px;top:290px;width:71px">158.5</div>
<div class="c r" style="left:241px;top:290px;width:85px">64.4</div>
<div class="c r" style="left:327px;top:290px;width:141px">80.8</div>
<div class="c r" style="left:469px;top:290px;width:130px">100.3</div>
<div class="c r" style="left:23px;top:305px;width:29px">14</div>
<div class="c l" style="left:53px;top:305px;width:43px">female</div>
<div class="c r" style="left:97px;top:305px;width:71px">22.3</div>
<div class="c r" style="left:169px;top:305px;width:71px">160.0</div>
<div class="c r" style="left:241px;top:305px;width:85px">69.4</div>
<div class="c r" style="left:327px;top:305px;width:141px">79.3</div>
<div class="c r" style="left:469px;top:305px;width:130px">102.7</div>
<div class="c r" style="left:23px;top:320px;width:29px">17</div>
<div class="c l" style="left:53px;top:320px;width:43px">female</div>
<div class="c r" style="left:97px;top:320px;width:71px">21.1</div>
<div class="c r" style="left:169px;top:320px;width:71px">168.5</div>
<div class="c r" style="left:241px;top:320px;width:85px">62.6</div>
<div class="c r" style="left:327px;top:320px;width:141px">76.2</div>
<div class="c r" style="left:469px;top:320px;width:130px">99.8</div>
<div class="c r" style="left:23px;top:335px;width:29px">18</div>
<div class="c l" style="left:53px;top:335px;width:43px">female</div>
<div class="c r" style="left:97px;top:335px;width:71px">19.5</div>
<div class="c r" style="left:169px;top:335px;width:71px">165.0</div>
<div class="c r" style="left:241px;top:335px;width:85px">58.5</div>
<div class="c r" style="left:327px;top:335px;width:141px">78.7</div>
<div class="c r" style="left:469px;top:335px;width:130px">98.2</div>
<div class="c r" style="left:23px;top:350px;width:29px">19</div>
<div class="c l" style="left:53px;top:350px;width:43px">male</div>
<div class="c r" style="left:97px;top:350px;width:71px">18.2</div>
<div class="c r" style="left:169px;top:350px;width:71px">174.0</div>
<div class="c r" style="left:241px;top:350px;width:85px">83.5</div>
<div class="c r" style="left:327px;top:350px;width:141px">97.8</div>
<div class="c r" style="left:469px;top:350px;width:130px">111.3</div>
<div class="c r" style="left:23px;top:365px;width:29px">21</div>
<div class="c l" style="left:53px;top:365px;width:43px">female</div>
<div class="c r" style="left:97px;top:365px;width:71px">19.0</div>
<div class="c r" style="left:169px;top:365px;width:71px">167.5</div>
<div class="c r" style="left:241px;top:365px;width:85px">91.2</div>
<div class="c r" style="left:327px;top:365px;width:141px">109.8</div>
<div class="c r" style="left:469px;top:365px;width:130px">112.7</div>
<div class="c r" style="left:23px;top:380px;width:29px">22</div>
<div class="c l" style="left:53px;top:380px;width:43px">female</div>
<div class="c r" style="left:97px;top:380px;width:71px">20.8</div>
<div class="c r" style="left:169px;top:380px;width:71px">155.0</div>
<div class="c r" style="left:241px;top:380px;width:85px">48.1</div>
<div class="c r" style="left:327px;top:380px;width:141px">75.2</div>
<div class="c r" style="left:469px;top:380px;width:130px">87.8</div>
<div class="c r" style="left:23px;top:395px;width:29px">27</div>
<div class="c l" style="left:53px;top:395px;width:43px">male</div>
<div class="c r" style="left:97px;top:395px;width:71px">18.8</div>
<div class="c r" style="left:169px;top:395px;width:71px">179.1</div>
<div class="c r" style="left:241px;top:395px;width:85px">75.1</div>
<div class="c r" style="left:327px;top:395px;width:141px">80.7</div>
<div class="c r" style="left:469px;top:395px;width:130px">98.7</div>
<div class="c r" style="left:23px;top:410px;width:29px">32</div>
<div class="c l" style="left:53px;top:410px;width:43px">male</div>
<div class="c r" style="left:97px;top:410px;width:71px">18.5</div>
<div class="c r" style="left:169px;top:410px;width:71px">184.0</div>
<div class="c r" style="left:241px;top:410px;width:85px">133.8</div>
<div class="c r" style="left:327px;top:410px;width:141px">125.8</div>
<div class="c r" style="left:469px;top:410px;width:130px">130.2</div>
<div class="c r" style="left:23px;top:425px;width:29px">33</div>
<div class="c l" style="left:53px;top:425px;width:43px">male</div>
<div class="c r" style="left:97px;top:425px;width:71px">19.2</div>
<div class="c r" style="left:169px;top:425px;width:71px">180.0</div>
<div class="c r" style="left:241px;top:425px;width:85px">80.1</div>
<div class="c r" style="left:327px;top:425px;width:141px">91.3</div>
<div class="c r" style="left:469px;top:425px;width:130px">101.2</div>
<div class="c r" style="left:23px;top:440px;width:29px">34</div>
<div class="c l" style="left:53px;top:440px;width:43px">female</div>
<div class="c r" style="left:97px;top:440px;width:71px">21.5</div>
<div class="c r" style="left:169px;top:440px;width:71px">155.5</div>
<div class="c r" style="left:241px;top:440px;width:85px">64.9</div>
<div class="c r" style="left:327px;top:440px;width:141px">88.8</div>
<div class="c r" style="left:469px;top:440px;width:130px">102.4</div>
<div class="c r" style="left:23px;top:455px;width:29px">35</div>
<div class="c l" style="left:53px;top:455px;width:43px">male</div>
<div class="c r" style="left:97px;top:455px;width:71px">18.0</div>
<div class="c r" style="left:169px;top:455px;width:71px">177.5</div>
<div class="c r" style="left:241px;top:455px;width:85px">104.8</div>
<div class="c r" style="left:327px;top:455px;width:141px">107.3</div>
<div class="c r" style="left:469px;top:455px;width:130px">120.3</div>
<div class="c r" style="left:23px;top:470px;width:29px">36</div>
<div class="c l" style="left:53px;top:470px;width:43px">female</div>
<div class="c r" style="left:97px;top:470px;width:71px">19.0</div>
<div class="c r" style="left:169px;top:470px;width:71px">164.5</div>
<div class="c r" style="left:241px;top:470px;width:85px">68.1</div>
<div class="c r" style="left:327px;top:470px;width:141px">82.5</div>
<div class="c r" style="left:469px;top:470px;width:130px">99.1</div>
<div class="c r" style="left:23px;top:485px;width:29px">38</div>
<div class="c l" style="left:53px;top:485px;width:43px">male</div>
<div class="c r" style="left:97px;top:485px;width:71px">18.6</div>
<div class="c r" style="left:169px;top:485px;width:71px">174.0</div>
<div class="c r" style="left:241px;top:485px;width:85px">111.1</div>
<div class="c r" style="left:327px;top:485px;width:141px">121.2</div>
<div class="c r" style="left:469px;top:485px;width:130px">126.0</div>
<div class="c r" style="left:23px;top:500px;width:29px">45</div>
<div class="c l" style="left:53px;top:500px;width:43px">female</div>
<div class="c r" style="left:97px;top:500px;width:71px">18.3</div>
<div class="c r" style="left:169px;top:500px;width:71px">161.0</div>
<div class="c r" style="left:241px;top:500px;width:85px">60.8</div>
<div class="c r" style="left:327px;top:500px;width:141px">75.5</div>
<div class="c r" style="left:469px;top:500px;width:130px">97.9</div>
<div class="c r" style="left:23px;top:515px;width:29px">46</div>
<div class="c l" style="left:53px;top:515px;width:43px">male</div>
<div class="c r" style="left:97px;top:515px;width:71px">20.2</div>
<div class="c r" style="left:169px;top:515px;width:71px">164.0</div>
<div class="c r" style="left:241px;top:515px;width:85px">81.0</div>
<div class="c r" style="left:327px;top:515px;width:141px">87.2</div>
<div class="c r" style="left:469px;top:515px;width:130px">101.5</div>
<div class="c r" style="left:23px;top:530px;width:29px">49</div>
<div class="c l" style="left:53px;top:530px;width:43px">male</div>
<div class="c r" style="left:97px;top:530px;width:71px">24.0</div>
<div class="c r" style="left:169px;top:530px;width:71px">186.5</div>
<div class="c r" style="left:241px;top:530px;width:85px">93.4</div>
<div class="c r" style="left:327px;top:530px;width:141px">86.3</div>
<div class="c r" style="left:469px;top:530px;width:130px">105.5</div>
<div class="c r" style="left:23px;top:545px;width:29px">50</div>
<div class="c l" style="left:53px;top:545px;width:43px">female</div>
<div class="c r" style="left:97px;top:545px;width:71px">28.1</div>
<div class="c r" style="left:169px;top:545px;width:71px">174.0</div>
<div class="c r" style="left:241px;top:545px;width:85px">108.6</div>
<div class="c r" style="left:327px;top:545px;width:141px">94.5</div>
<div class="c r" style="left:469px;top:545px;width:130px">136.2</div>
<div class="c r" style="left:23px;top:560px;width:29px">56</div>
<div class="c l" style="left:53px;top:560px;width:43px">male</div>
<div class="c r" style="left:97px;top:560px;width:71px">23.5</div>
<div class="c r" style="left:169px;top:560px;width:71px">189.5</div>
<div class="c r" style="left:241px;top:560px;width:85px">129.3</div>
<div class="c r" style="left:327px;top:560px;width:141px">117.8</div>
<div class="c r" style="left:469px;top:560px;width:130px">123.0</div>
<div class="c r" style="left:23px;top:575px;width:29px">57</div>
<div class="c l" style="left:53px;top:575px;width:43px">female</div>
<div class="c r" style="left:97px;top:575px;width:71px">23.3</div>
<div class="c r" style="left:169px;top:575px;width:71px">168.0</div>
<div class="c r" style="left:241px;top:575px;width:85px">98.0</div>
<div class="c r" style="left:327px;top:575px;width:141px">101.3</div>
<div class="c r" style="left:469px;top:575px;width:130px">130.3</div>
<div class="c r" style="left:23px;top:590px;width:29px">59</div>
<div class="c l" style="left:53px;top:590px;width:43px">female</div>
<div class="c r" style="left:97px;top:590px;width:71px">17.9</div>
<div class="c r" style="left:169px;top:590px;width:71px">174.0</div>
<div class="c r" style="left:241px;top:590px;width:85px">91.7</div>
<div class="c r" style="left:327px;top:590px;width:141px">98.1</div>
<div class="c r" style="left:469px;top:590px;width:130px">115.2</div>
<div class="c r" style="left:23px;top:605px;width:29px">61</div>
<div class="c l" style="left:53px;top:605px;width:43px">female</div>
<div class="c r" style="left:97px;top:605px;width:71px">23.2</div>
<div class="c r" style="left:169px;top:605px;width:71px">162.5</div>
<div class="c r" style="left:241px;top:605px;width:85px">60.7</div>
<div class="c r" style="left:327px;top:605px;width:141px">72.4</div>
<div class="c r" style="left:469px;top:605px;width:130px">100.5</div>
<div class="c r" style="left:23px;top:620px;width:29px">62</div>
<div class="c l" style="left:53px;top:620px;width:43px">male</div>
<div class="c r" style="left:97px;top:620px;width:71px">21.7</div>
<div class="c r" style="left:169px;top:620px;width:71px">177.5</div>
<div class="c r" style="left:241px;top:620px;width:85px">68.9</div>
<div class="c r" style="left:327px;top:620px;width:141px">79.6</div>
<div class="c r" style="left:469px;top:620px;width:130px">99.1</div>
<div class="c r" style="left:23px;top:635px;width:29px">64</div>
<div class="c l" style="left:53px;top:635px;width:43px">female</div>
<div class="c r" style="left:97px;top:635px;width:71px">22.9</div>
<div class="c r" style="left:169px;top:635px;width:71px">177.5</div>
<div class="c r" style="left:241px;top:635px;width:85px">67.3</div>
<div class="c r" style="left:327px;top:635px;width:141px">73.7</div>
<div class="c r" style="left:469px;top:635px;width:130px">94.5</div>
<div class="c r" style="left:23px;top:650px;width:29px">65</div>
<div class="c l" style="left:53px;top:650px;width:43px">female</div>
<div class="c r" style="left:97px;top:650px;width:71px">28.2</div>
<div class="c r" style="left:169px;top:650px;width:71px">172.5</div>
<div class="c r" style="left:241px;top:650px;width:85px">111.7</div>
<div class="c r" style="left:327px;top:650px;width:141px">108.7</div>
<div class="c r" style="left:469px;top:650px;width:130px">151.2</div>
<div class="c r" style="left:23px;top:665px;width:29px">66</div>
<div class="c l" style="left:53px;top:665px;width:43px">male</div>
<div class="c r" style="left:97px;top:665px;width:71px">29.1</div>
<div class="c r" style="left:169px;top:665px;width:71px">168.0</div>
<div class="c r" style="left:241px;top:665px;width:85px">67.9</div>
<div class="c r" style="left:327px;top:665px;width:141px">81.4</div>
<div class="c r" style="left:469px;top:665px;width:130px">92.9</div>
<div class="c r" style="left:23px;top:680px;width:29px">68</div>
<div class="c l" style="left:53px;top:680px;width:43px">male</div>
<div class="c r" style="left:97px;top:680px;width:71px">29.0</div>
<div class="c r" style="left:169px;top:680px;width:71px">172.0</div>
<div class="c r" style="left:241px;top:680px;width:85px">72.1</div>
<div class="c r" style="left:327px;top:680px;width:141px">85.5</div>
<div class="c r" style="left:469px;top:680px;width:130px">98.5</div>
<div class="c r" style="left:23px;top:695px;width:29px">69</div>
<div class="c l" style="left:53px;top:695px;width:43px">female</div>
<div class="c r" style="left:97px;top:695px;width:71px">22.5</div>
<div class="c r" style="left:169px;top:695px;width:71px">169.0</div>
<div class="c r" style="left:241px;top:695px;width:85px">70.3</div>
<div class="c r" style="left:327px;top:695px;width:141px">84.7</div>
<div class="c r" style="left:469px;top:695px;width:130px">98.9</div>
<div class="c r" style="left:23px;top:710px;width:29px">72</div>
<div class="c l" style="left:53px;top:710px;width:43px">female</div>
<div class="c r" style="left:97px;top:710px;width:71px">22.7</div>
<div class="c r" style="left:169px;top:710px;width:71px">157.4</div>
<div class="c r" style="left:241px;top:710px;width:85px">55.5</div>
<div class="c r" style="left:327px;top:710px;width:141px">72.1</div>
<div class="c r" style="left:469px;top:710px;width:130px">97.0</div>
<div class="c r" style="left:23px;top:725px;width:29px">73</div>
<div class="c l" style="left:53px;top:725px;width:43px">female</div>
<div class="c r" style="left:97px;top:725px;width:71px">23.5</div>
<div class="c r" style="left:169px;top:725px;width:71px">163.5</div>
<div class="c r" style="left:241px;top:725px;width:85px">88.2</div>
<div class="c r" style="left:327px;top:725px;width:141px">105.1</div>
<div class="c r" style="left:469px;top:725px;width:130px">114.0</div>
<div class="c r" style="left:23px;top:740px;width:29px">74</div>
<div class="c l" style="left:53px;top:740px;width:43px">male</div>
<div class="c r" style="left:97px;top:740px;width:71px">30.7</div>
<div class="c r" style="left:169px;top:740px;width:71px">173.0</div>
<div class="c r" style="left:241px;top:740px;width:85px">94.2</div>
<div class="c r" style="left:327px;top:740px;width:141px">94.2</div>
<div class="c r" style="left:469px;top:740px;width:130px">106.5</div>
<div class="c r" style="left:23px;top:755px;width:29px">75</div>
<div class="c l" style="left:53px;top:755px;width:43px">female</div>
<div class="c r" style="left:97px;top:755px;width:71px">21.7</div>
<div class="c r" style="left:169px;top:755px;width:71px">166.5</div>
<div class="c r" style="left:241px;top:755px;width:85px">103.3</div>
<div class="c r" style="left:327px;top:755px;width:141px">101.5</div>
<div class="c r" style="left:469px;top:755px;width:130px">123.3</div>
<div class="c r" style="left:23px;top:770px;width:29px">77</div>
<div class="c l" style="left:53px;top:770px;width:43px">male</div>
<div class="c r" style="left:97px;top:770px;width:71px">21.9</div>
<div class="c r" style="left:169px;top:770px;width:71px">178.0</div>
<div class="c r" style="left:241px;top:770px;width:85px">109.8</div>
<div class="c r" style="left:327px;top:770px;width:141px">114.7</div>
<div class="c r" style="left:469px;top:770px;width:130px">118.7</div>
<div class="c r" style="left:23px;top:785px;width:29px">81</div>
<div class="c l" style="left:53px;top:785px;width:43px">female</div>
<div class="c r" style="left:97px;top:785px;width:71px">21.6</div>
<div class="c r" style="left:169px;top:785px;width:71px">168.0</div>
<div class="c r" style="left:241px;top:785px;width:85px">96.6</div>
<div class="c r" style="left:327px;top:785px;width:141px">107.2</div>
<div class="c r" style="left:469px;top:785px;width:130px">146.3</div>
<div class="c r" style="left:23px;top:800px;width:29px">82</div>
<div class="c l" style="left:53px;top:800px;width:43px">female</div>
<div class="c r" style="left:97px;top:800px;width:71px">20.3</div>
<div class="c r" style="left:169px;top:800px;width:71px">167.5</div>
<div class="c r" style="left:241px;top:800px;width:85px">62.3</div>
<div class="c r" style="left:327px;top:800px;width:141px">68.7</div>
<div class="c r" style="left:469px;top:800px;width:130px">91.5</div>
<div class="c r" style="left:23px;top:815px;width:29px">85</div>
<div class="c l" style="left:53px;top:815px;width:43px">female</div>
<div class="c r" style="left:97px;top:815px;width:71px">22.3</div>
<div class="c r" style="left:169px;top:815px;width:71px">166.2</div>
<div class="c r" style="left:241px;top:815px;width:85px">94.3</div>
<div class="c r" style="left:327px;top:815px;width:141px">105.4</div>
<div class="c r" style="left:469px;top:815px;width:130px">118.2</div>
<div class="c r" style="left:23px;top:830px;width:29px">86</div>
<div class="c l" style="left:53px;top:830px;width:43px">female</div>
<div class="c r" style="left:97px;top:830px;width:71px">21.4</div>
<div class="c r" style="left:169px;top:830px;width:71px">176.0</div>
<div class="c r" style="left:241px;top:830px;width:85px">66.4</div>
<div class="c r" style="left:327px;top:830px;width:141px">73.3</div>
<div class="c r" style="left:469px;top:830px;width:130px">99.8</div>
<div class="c r" style="left:23px;top:845px;width:29px">88</div>
<div class="c l" style="left:53px;top:845px;width:43px">female</div>
<div class="c r" style="left:97px;top:845px;width:71px">20.3</div>
<div class="c r" style="left:169px;top:845px;width:71px">178.0</div>
<div class="c r" style="left:241px;top:845px;width:85px">63.4</div>
<div class="c r" style="left:327px;top:845px;width:141px">81.3</div>
<div class="c r" style="left:469px;top:845px;width:130px">105.3</div>
</div>
<!-- marching ants copy border (top + left) -->
<div class="abs" style="left:23px;top:185px;width:1417px;height:1px;background:repeating-linear-gradient(to right,#0f7b45 0,#0f7b45 6.700px,transparent 6.700px,transparent 9px)"></div>
<div class="abs" style="left:23px;top:185px;width:1px;height:666px;background:repeating-linear-gradient(to bottom,#0f7b45 0,#0f7b45 6.700px,transparent 6.700px,transparent 9px)"></div>
<!-- active cell I12 -->
<div class="abs" style="left:651px;top:348px;width:56px;height:18px;border:2px solid #107c41"></div>
<div class="abs" style="left:702px;top:361px;width:7px;height:7px;background:#fff"></div>
<div class="abs" style="left:703px;top:362px;width:5px;height:5px;background:#107c41"></div>

<!-- ================= BOTTOM ================= -->
<div id="tabbar"></div>
<div id="tabline"></div>
<div id="sheettab">Anthropometry Subsample baselin</div>
<div id="status"></div>
<div class="abs" style="left:15px;top:859px;width:0;height:0;border-top:5px solid transparent;border-bottom:5px solid transparent;border-right:7px solid #8e8e8e"></div>
<div class="abs" style="left:38px;top:859px;width:0;height:0;border-top:5px solid transparent;border-bottom:5px solid transparent;border-left:7px solid #8e8e8e"></div>
<svg style="left:317.500px;top:857.500px" width="11" height="11" viewBox="0 0 11 11"><path d="M5.500 .5v10M.5 5.500h10" stroke="#4d4d4d" stroke-width="1.800"/></svg>
<div class="abs" style="left:341px;top:852px;width:1px;height:20px;background:#d8d8d8"></div>
<div class="abs" style="left:14.500px;top:882px;font-size:12px;line-height:14px;color:#4b4b4b;white-space:nowrap;letter-spacing:.223px">Select destination and press ENTER or choose Paste</div>
<!-- view buttons -->
<div class="abs" style="left:1122px;top:878px;width:37px;height:22px;background:#a9a9a9"></div>
<svg style="left:1134px;top:882px" width="13" height="13" viewBox="0 0 13 13"><rect x="0" y="0" width="13" height="13" rx="1" fill="#fff"/><rect x="1.3" y="1.3" width="2.700" height="2.700" fill="#a4a4a4"/><rect x="1.3" y="5.3" width="2.700" height="2.700" fill="#a4a4a4"/><rect x="1.3" y="9.3" width="2.700" height="2.700" fill="#a4a4a4"/><rect x="5.3" y="1.3" width="2.700" height="2.700" fill="#a4a4a4"/><rect x="5.3" y="5.3" width="2.700" height="2.700" fill="#a4a4a4"/><rect x="5.3" y="9.3" width="2.700" height="2.700" fill="#a4a4a4"/><rect x="9.3" y="1.3" width="2.700" height="2.700" fill="#a4a4a4"/><rect x="9.3" y="5.3" width="2.700" height="2.700" fill="#a4a4a4"/><rect x="9.3" y="9.3" width="2.700" height="2.700" fill="#a4a4a4"/></svg>
<svg style="left:1169px;top:882px" width="14" height="13" viewBox="0 0 14 13"><rect x=".8" y=".6" width="12.300" height="11.800" rx=".5" fill="none" stroke="#5a5a5a" stroke-width="1.300"/><rect x="3.700" y="2.500" width="6.600" height="8" fill="none" stroke="#5a5a5a" stroke-width="1"/><path d="M5.200 4.700h3.600M5.200 6.600h3.600M5.200 8.500h3.600" stroke="#5a5a5a" stroke-width=".9"/></svg>
<svg style="left:1205px;top:882px" width="14" height="13" viewBox="0 0 14 13"><rect x=".8" y=".6" width="12.300" height="11.800" rx=".5" fill="none" stroke="#5a5a5a" stroke-width="1.300"/><path d="M4 .6v6.900M8.500 .6v6.900H.8" fill="none" stroke="#5a5a5a" stroke-width="1.100"/></svg>
<!-- zoom slider -->
<div class="abs" style="left:1238px;top:887.500px;width:8px;height:2px;background:#4d4d4d"></div>
<div class="abs" style="left:1254px;top:886.500px;width:98px;height:4px;border-radius:2px;background:#a3a3a3"></div>
<div class="abs" style="left:1297px;top:882.500px;width:12px;height:12px;border-radius:6px;background:#fff;box-shadow:0 0 1.500px rgba(0,0,0,.55)"></div>
<svg style="left:1360.300px;top:884.500px" width="8" height="8" viewBox="0 0 8 8"><path d="M4 0v8M0 4h8" stroke="#4a4a4a" stroke-width="2"/></svg>
<div class="abs" style="left:1385.500px;top:882px;font-size:12px;line-height:14px;color:#4b4b4b;white-space:nowrap;letter-spacing:-.1px">100%</div>

</body>
</html>
